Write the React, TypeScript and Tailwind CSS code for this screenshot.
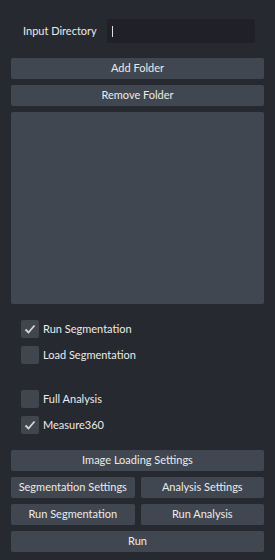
import React from "react";

const font = { fontFamily: 'Lato, "Liberation Sans", Arial, sans-serif' };

function Btn({ children, className = "" }: { children: React.ReactNode; className?: string }) {
  return (
    <div className={`h-[21px] rounded-[2px] bg-[#414750] flex items-center justify-center whitespace-nowrap text-[11px] text-[#ebebeb] ${className}`}>
      {children}
    </div>
  );
}

function Check({ checked, label }: { checked: boolean; label: string }) {
  return (
    <div className="flex items-center h-[18px] gap-[4px]">
      <div className="w-[18px] h-[18px] rounded-[2px] bg-[#41454d] flex items-center justify-center">
        {checked && (
          <svg width="14" height="14" viewBox="0 0 14 14">
            <path d="M2.5 7.5 L5.5 10.5 L11.5 3.5" fill="none" stroke="#d6d6d6" strokeWidth="1.8" />
          </svg>
        )}
      </div>
      <span className="text-[11px] whitespace-nowrap text-[#ebebeb]">{label}</span>
    </div>
  );
}

export default function App() {
  return (
    <div className="w-[275px] h-[560px] bg-[#262930] px-[11px] flex flex-col" style={font}>
      <div className="flex items-center mt-[19px] h-[24px]">
        <span className="ml-[12px] w-[84px] whitespace-nowrap text-[11px] text-[#ebebeb]">Input Directory</span>
        <div className="flex-1 mr-[9px] h-[24px] rounded-[2px] bg-[#1f2127] flex items-center">
          <div className="ml-[5px] w-[1px] h-[11px] bg-[#e0e0e0]" />
        </div>
      </div>
      <Btn className="mt-[15px]">Add Folder</Btn>
      <Btn className="mt-[6px]">Remove Folder</Btn>
      <div className="mt-[6px] h-[192px] rounded-[2px] bg-[#414750]" />
      <div className="ml-[10px] mt-[16px] flex flex-col gap-[8px]">
        <Check checked label="Run Segmentation" />
        <Check checked={false} label="Load Segmentation" />
      </div>
      <div className="ml-[10px] mt-[26px] flex flex-col gap-[8px]">
        <Check checked={false} label="Full Analysis" />
        <Check checked label="Measure360" />
      </div>
      <Btn className="mt-[16px]">Image Loading Settings</Btn>
      <div className="mt-[6px] grid grid-cols-2 gap-x-[6px] gap-y-[6px]">
        <Btn>Segmentation Settings</Btn>
        <Btn>Analysis Settings</Btn>
        <Btn>Run Segmentation</Btn>
        <Btn>Run Analysis</Btn>
      </div>
      <Btn className="mt-[6px]">Run</Btn>
    </div>
  );
}
